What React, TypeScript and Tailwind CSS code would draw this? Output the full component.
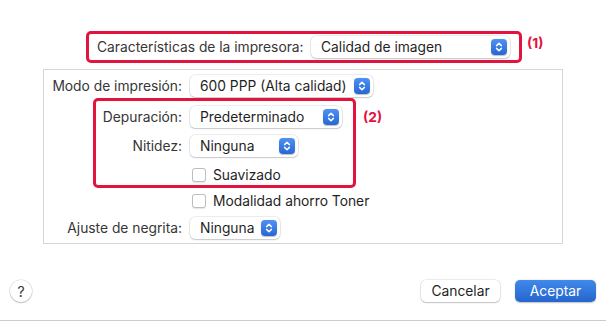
import React from "react";

function Stepper() {
  return (
    <span className="flex h-[16px] w-[16px] items-center justify-center rounded-[4px] bg-gradient-to-b from-[#4f92f2] to-[#2766d4] shadow-[0_0.5px_1px_rgba(0,0,0,0.25)]">
      <svg width="16" height="16" viewBox="0 0 16 16" fill="none">
        <path d="M5.6 6.6 L8 4.3 L10.4 6.6" stroke="white" strokeWidth="1.5" strokeLinecap="round" strokeLinejoin="round" />
        <path d="M5.6 9.4 L8 11.7 L10.4 9.4" stroke="white" strokeWidth="1.5" strokeLinecap="round" strokeLinejoin="round" />
      </svg>
    </span>
  );
}

function Popup({ text, w }: { text: string; w: string }) {
  return (
    <div
      className={`flex h-[22px] ${w} items-center justify-between rounded-[5px] bg-white pl-[10px] pr-[3px] text-[13.8px] text-[#1f1f1f] shadow-[0_0_0_0.5px_rgba(0,0,0,0.14),0_1px_1.5px_rgba(0,0,0,0.16)]`}
    >
      <span className="whitespace-nowrap">{text}</span>
      <Stepper />
    </div>
  );
}

function Label({ text }: { text: string }) {
  return <div className="w-[138px] shrink-0 whitespace-nowrap text-right text-[13.8px] text-[#363636]">{text}</div>;
}

function Checkbox({ text }: { text: string }) {
  return (
    <div className="flex items-center">
      <span className="ml-[2px] h-[14px] w-[14px] rounded-[3px] border border-[#bdbdbd] bg-white shadow-[0_0.5px_1px_rgba(0,0,0,0.1)]" />
      <span className="ml-[7px] text-[13.8px] text-[#1f1f1f]">{text}</span>
    </div>
  );
}

export default function App() {
  return (
    <div
      className="relative h-[321px] w-[606px] overflow-hidden bg-white"
      style={{ fontFamily: 'Inter, "Liberation Sans", sans-serif' }}
    >
      {/* top row */}
      <div className="flex pl-[86px] pt-[31px]">
        <div className="flex h-[32px] w-[436px] items-center justify-between rounded-[5px] border-[3px] border-[#e2133d] pl-[8px] pr-[9px]">
          <span className="whitespace-nowrap text-[13.8px] text-[#363636]">Características de la impresora:</span>
          <Popup text="Calidad de imagen" w="w-[199px]" />
        </div>
        <span className="ml-[5px] mt-[4px] text-[13.8px] font-bold leading-[16px] text-[#e2133d]">(1)</span>
      </div>

      {/* panel */}
      <div className="relative mx-[43px] mt-[6px] flex h-[175px] flex-col border border-[#d6d6d6] pt-[5px]">
        <div className="flex h-[22px] items-center gap-[8px]">
          <Label text="Modo de impresión:" />
          <Popup text="600 PPP (Alta calidad)" w="w-[183px]" />
        </div>
        <div className="mt-[9px] flex h-[22px] items-center gap-[8px]">
          <Label text="Depuración:" />
          <Popup text="Predeterminado" w="w-[152px]" />
        </div>
        <div className="mt-[7px] flex h-[22px] items-center gap-[8px]">
          <Label text="Nitidez:" />
          <Popup text="Ninguna" w="w-[108px]" />
        </div>
        <div className="mt-[7px] flex h-[22px] items-center gap-[8px]">
          <div className="w-[138px] shrink-0" />
          <Checkbox text="Suavizado" />
        </div>
        <div className="mt-[4px] flex h-[22px] items-center gap-[8px]">
          <div className="w-[138px] shrink-0" />
          <Checkbox text="Modalidad ahorro Toner" />
        </div>
        <div className="mt-[5px] flex h-[22px] items-center gap-[8px]">
          <Label text="Ajuste de negrita:" />
          <Popup text="Ninguna" w="w-[90px]" />
        </div>

        {/* highlight (2) */}
        <div className="absolute left-[49px] top-[28px] h-[90px] w-[263px] rounded-[5px] border-[3px] border-[#e2133d]" />
        <span className="absolute left-[319px] top-[39px] text-[13.8px] font-bold leading-[16px] text-[#e2133d]">(2)</span>
      </div>

      {/* bottom row */}
      <div className="mt-[36px] flex items-center pl-[10px] pr-[10px]">
        <span className="flex h-[22px] w-[22px] items-center justify-center rounded-full bg-white text-[14px] text-[#333] shadow-[0_0_0_0.5px_rgba(0,0,0,0.15),0_1px_1.5px_rgba(0,0,0,0.2)]">
          ?
        </span>
        <div className="ml-auto flex items-center gap-[15px]">
          <button className="flex h-[22px] w-[79px] items-center justify-center rounded-[5px] bg-white text-[13.8px] text-[#1f1f1f] shadow-[0_0_0_0.5px_rgba(0,0,0,0.15),0_1px_1.5px_rgba(0,0,0,0.18)]">
            Cancelar
          </button>
          <button className="flex h-[22px] w-[81px] items-center justify-center rounded-[5px] bg-gradient-to-b from-[#4189ea] to-[#2565cd] text-[13.8px] text-white shadow-[0_0.5px_1.5px_rgba(0,0,0,0.25)]">
            Aceptar
          </button>
        </div>
      </div>

      <div className="absolute bottom-0 left-0 h-px w-full bg-[#cccccc]" />
    </div>
  );
}
